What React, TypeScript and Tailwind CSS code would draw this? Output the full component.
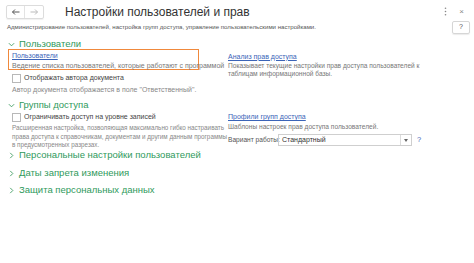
import React from 'react';

const Chevron = ({ open }: { open: boolean }) => (
  <svg width="7" height="7" viewBox="0 0 8 8" className="shrink-0">
    {open ? (
      <path d="M1 2.5 L4 5.5 L7 2.5" fill="none" stroke="#3a9a5e" strokeWidth="1" />
    ) : (
      <path d="M2.5 1 L5.5 4 L2.5 7" fill="none" stroke="#3a9a5e" strokeWidth="1" />
    )}
  </svg>
);

const Group = ({ title, open, children }: { title: string; open: boolean; children?: React.ReactNode }) => (
  <div>
    <div className="flex items-center gap-[4px] h-[12px] text-[9.5px] text-[#2f9a5c]">
      <Chevron open={open} />
      <span>{title}</span>
    </div>
    {children}
  </div>
);

const Check = ({ label }: { label: string }) => (
  <div className="flex items-center gap-[3px] h-[11px]">
    <div className="w-[9px] h-[9px] border border-[#b8b8b8] bg-white" />
    <span className="text-[7px] text-[#444]">{label}</span>
  </div>
);

export default function App() {
  return (
    <div className="w-[474px] h-[263px] bg-white font-['Liberation_Sans',Arial,sans-serif] overflow-hidden">
      {/* Header */}
      <div className="flex items-center h-[20px] pt-[3px] pl-[6px] pr-[10px]">
        <div className="flex h-[14px] border border-[#dcdcdc] rounded-[2px] shadow-[0_1px_1px_rgba(0,0,0,0.06)]">
          <div className="w-[18px] flex items-center justify-center border-r border-[#e3e3e3]">
            <svg width="8" height="6" viewBox="0 0 8 6">
              <path d="M0.5 3 H7.5 M3 0.5 L0.5 3 L3 5.5" fill="none" stroke="#555" strokeWidth="1" />
            </svg>
          </div>
          <div className="w-[18px] flex items-center justify-center">
            <svg width="8" height="6" viewBox="0 0 8 6">
              <path d="M0.5 3 H7.5 M5 0.5 L7.5 3 L5 5.5" fill="none" stroke="#bbb" strokeWidth="1" />
            </svg>
          </div>
        </div>
        <div className="ml-[21px] text-[12px] text-[#333]">Настройки пользователей и прав</div>
        <div className="ml-auto flex items-center gap-[12px]">
          <svg width="3" height="9" viewBox="0 0 3 9">
            <circle cx="1.5" cy="1.2" r="0.8" fill="#888" />
            <circle cx="1.5" cy="4.5" r="0.8" fill="#888" />
            <circle cx="1.5" cy="7.8" r="0.8" fill="#888" />
          </svg>
          <span className="text-[8px] text-[#888] leading-none">×</span>
        </div>
      </div>

      <div className="flex items-center h-[14px] pl-[7px] pr-[4px]">
        <span className="text-[6.1px] text-[#555] whitespace-nowrap">
          Администрирование пользователей, настройка групп доступа, управление пользовательскими настройками.
        </span>
        <div className="ml-auto w-[18px] h-[13px] border border-[#d6d6d6] rounded-[2px] flex items-center justify-center text-[7px] text-[#555] shadow-[0_1px_1px_rgba(0,0,0,0.08)]">
          ?
        </div>
      </div>

      {/* Content */}
      <div className="pl-[8px] pt-[4px] flex flex-col">
        <Group title="Пользователи" open>
          <div className="grid grid-cols-[220px_240px] mt-[-1px]">
            <div>
              <div className="border-[1.5px] border-[#f0893c] w-[191px] h-[21px] pl-[3px] pt-[2px]">
                <div className="text-[7px] text-[#3b64b8] underline leading-[8px]">Пользователи</div>
                <div className="text-[7px] text-[#777] leading-[9px] mt-[1px] whitespace-nowrap">
                  Ведение списка пользователей, которые работают с программой
                </div>
              </div>
              <div className="pl-[4px] mt-[3px]">
                <Check label="Отображать автора документа" />
                <div className="text-[7px] text-[#888] leading-[9px] mt-[1px]">
                  Автор документа отображается в поле "Ответственный".
                </div>
              </div>
            </div>
            <div className="pt-[3.5px]">
              <div className="text-[7px] text-[#3b64b8] underline leading-[8px]">Анализ прав доступа</div>
              <div className="text-[6.6px] text-[#777] leading-[8.5px] mt-[1px] w-[200px]">
                Показывает текущие настройки прав доступа пользователей к таблицам информационной базы.
              </div>
            </div>
          </div>
        </Group>

        <div className="mt-[5px]">
          <Group title="Группы доступа" open>
            <div className="grid grid-cols-[220px_240px] mt-[1px]">
              <div className="pl-[4px]">
                <Check label="Ограничивать доступ на уровне записей" />
                <div className="text-[6.3px] text-[#888] leading-[8.5px] mt-[1px] whitespace-nowrap">
                  Расширенная настройка, позволяющая максимально гибко настраивать
                  <br />
                  права доступа к справочникам, документам и другим данным программы
                  <br />
                  в предусмотренных разрезах.
                </div>
              </div>
              <div className="pt-[1px]">
                <div className="text-[7px] text-[#3b64b8] underline leading-[8px]">Профили групп доступа</div>
                <div className="text-[6.6px] text-[#777] leading-[9px] mt-[1px]">
                  Шаблоны настроек прав доступа пользователей.
                </div>
                <div className="flex items-center mt-[3px] h-[12px]">
                  <span className="text-[6.6px] text-[#555] w-[50px] whitespace-nowrap">Вариант работы:</span>
                  <div className="w-[134px] h-[12px] border border-[#cfcfcf] flex">
                    <span className="flex-1 text-[7px] text-[#333] pl-[3px] leading-[10px]">Стандартный</span>
                    <div className="w-[11px] border-l border-[#dcdcdc] flex items-center justify-center">
                      <svg width="4" height="3" viewBox="0 0 4 3">
                        <path d="M0 0 H4 L2 3 Z" fill="#666" />
                      </svg>
                    </div>
                  </div>
                  <span className="ml-[5px] text-[7.5px] text-[#3b64b8]">?</span>
                </div>
              </div>
            </div>
          </Group>
        </div>

        <div className="mt-[0px]">
          <Group title="Персональные настройки пользователей" open={false} />
        </div>
        <div className="mt-[6px]">
          <Group title="Даты запрета изменения" open={false} />
        </div>
        <div className="mt-[5px]">
          <Group title="Защита персональных данных" open={false} />
        </div>
      </div>
    </div>
  );
}
